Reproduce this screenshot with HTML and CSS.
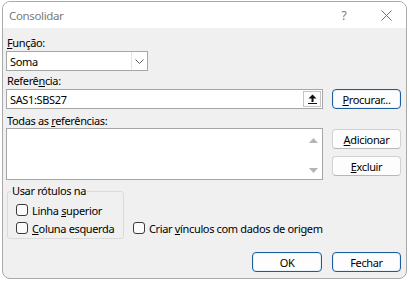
FILE: index.html
```html
<!DOCTYPE html>
<html lang="pt">
<head>
    <meta charset="UTF-8">
    <title>Consolidar</title>
    <link rel="stylesheet" href="styles.css">
</head>
<body>
    <div class="dialog">
        <!-- Title bar -->
        <div class="titlebar">
            <span class="title">Consolidar</span>
            <span class="caption-btn help">?</span>
            <span class="caption-btn close">
                <svg width="11" height="11" viewBox="0 0 11 11"><path d="M0.5 0.5 L10.5 10.5 M10.5 0.5 L0.5 10.5" stroke="#6f6f6f" stroke-width="1"/></svg>
            </span>
        </div>

        <div class="body">
            <div class="label"><u>F</u>unção:</div>
            <div class="select">
                <span class="select-value">Soma</span>
                <span class="select-arrow">
                    <svg width="9" height="5" viewBox="0 0 9 5"><path d="M0.5 0.5 L4.5 4.5 L8.5 0.5" fill="none" stroke="#606060" stroke-width="1"/></svg>
                </span>
            </div>

            <div class="label">Referê<u>n</u>cia:</div>
            <div class="row">
                <div class="input">
                    <span class="input-value">SAS1:SBS27</span>
                    <span class="collapse-btn">
                        <svg width="9" height="10" viewBox="0 0 9 10"><path d="M4.5 0.5 L8.5 4.5 L5.5 4.5 L5.5 8 L3.5 8 L3.5 4.5 L0.5 4.5 Z" fill="#111"/><rect x="0" y="9" width="9" height="1" fill="#111"/></svg>
                    </span>
                </div>
                <button class="btn btn-accent"><u>P</u>rocurar...</button>
            </div>

            <div class="label label-list">Todas as <u>r</u>eferências:</div>
            <div class="row row-list">
                <div class="listbox">
                    <div class="scrollbar">
                        <svg width="9" height="5" viewBox="0 0 9 5"><path d="M4.5 0 L9 5 L0 5 Z" fill="#b4b4b4"/></svg>
                        <svg width="9" height="5" viewBox="0 0 9 5"><path d="M0 0 L9 0 L4.5 5 Z" fill="#b4b4b4"/></svg>
                    </div>
                </div>
                <div class="side-buttons">
                    <button class="btn"><u>A</u>dicionar</button>
                    <button class="btn"><u>E</u>xcluir</button>
                </div>
            </div>

            <div class="row row-options">
                <fieldset class="group">
                    <legend>Usar rótulos na</legend>
                    <label class="check"><span class="box"></span><span>Linha <u>s</u>uperior</span></label>
                    <label class="check"><span class="box"></span><span><u>C</u>oluna esquerda</span></label>
                </fieldset>
                <label class="check check-link"><span class="box"></span><span>Criar <u>v</u>ínculos com dados de origem</span></label>
            </div>

            <div class="footer">
                <button class="btn btn-accent btn-ok">OK</button>
                <button class="btn btn-accent">Fechar</button>
            </div>
        </div>
    </div>
</body>
</html>
```

FILE: styles.css
```css
* {
    margin: 0;
    padding: 0;
    box-sizing: border-box;
}

body {
    font-family: 'Noto Sans', 'Open Sans', sans-serif;
    font-size: 11px;
    letter-spacing: -0.35px;
    color: #000000;
    background: #ffffff;
    width: 409px;
    height: 281px;
    overflow: hidden;
}

u {
    text-decoration: underline;
    text-underline-offset: 1px;
}

/* Window */
.dialog {
    margin: 1px 0 0 2px;
    width: 405px;
    height: 278px;
    border: 1px solid #a9a9a9;
    border-radius: 8px;
    overflow: hidden;
    background: #f0f0f0;
    display: flex;
    flex-direction: column;
}

.titlebar {
    height: 26px;
    background: #ffffff;
    display: flex;
    align-items: center;
    flex-shrink: 0;
}

.title {
    flex: 1;
    padding-left: 6px;
    color: #7a7a7a;
    font-size: 11.5px;
}

.caption-btn {
    display: flex;
    align-items: center;
    justify-content: center;
    height: 100%;
    color: #7a7a7a;
}

.help {
    width: 46px;
    font-size: 12px;
}

.close {
    width: 39px;
}

/* Body */
.body {
    flex: 1;
    padding: 7px 5px 0 3px;
    display: flex;
    flex-direction: column;
}

.label {
    height: 16px;
    line-height: 16px;
    padding-left: 1px;
}

.row + .label,
.select + .label {
    margin-top: 2px;
}

.label-list {
    margin-top: 4px !important;
    height: 15px;
    line-height: 15px;
}

.row {
    display: flex;
    gap: 9px;
}

.select {
    width: 142px;
    height: 20px;
    background: #ffffff;
    border: 1px solid #a6a6a6;
    display: flex;
    align-items: center;
}

.select-value {
    flex: 1;
    padding-left: 3px;
}

.select-arrow {
    width: 16px;
    height: 100%;
    border-left: 1px solid #e3e3e3;
    display: flex;
    align-items: center;
    justify-content: center;
}

.input {
    width: 317px;
    height: 20px;
    background: #ffffff;
    border: 1px solid #a6a6a6;
    display: flex;
    align-items: center;
    padding-right: 1px;
}

.input-value {
    flex: 1;
    padding-left: 3px;
}

.collapse-btn {
    width: 18px;
    height: 16px;
    border: 1px solid #c4c4c4;
    background: #fdfdfd;
    display: flex;
    align-items: center;
    justify-content: center;
}

/* Buttons */
.btn {
    width: 69px;
    height: 20px;
    font-family: inherit;
    font-size: 11px;
    letter-spacing: -0.35px;
    color: #000000;
    background: #fdfdfd;
    border: 1px solid #d0d0d0;
    border-bottom-color: #b8b8b8;
    border-radius: 4px;
}

.btn-accent {
    border: 1px solid #1d5c9c;
    box-shadow: inset 0 0 0 1px #e8f0f8;
}

.btn-ok {
    width: 70px;
}

/* List */
.listbox {
    width: 317px;
    height: 52px;
    background: #ffffff;
    border: 1px solid #a6a6a6;
    display: flex;
    justify-content: flex-end;
}

.scrollbar {
    width: 17px;
    padding: 9px 0 6px;
    display: flex;
    flex-direction: column;
    justify-content: space-between;
    align-items: center;
}

.side-buttons {
    padding-top: 1px;
    display: flex;
    flex-direction: column;
    gap: 7px;
}

/* Options */
.row-options {
    margin-top: 3px;
    gap: 9px;
    align-items: flex-end;
}

.group {
    margin-left: 1px;
    width: 117px;
    border: 1px solid #dadada;
    border-radius: 3px;
    padding: 2px 0 1px 8px;
}

.group legend {
    margin-left: -5px;
    padding: 0 1px;
    line-height: 16px;
}

.check {
    display: flex;
    align-items: center;
    gap: 4px;
    height: 18px;
    white-space: nowrap;
}

.box {
    width: 12px;
    height: 12px;
    border: 1px solid #3a3a3a;
    border-radius: 3px;
    background: #fbfbfb;
}

.check-link {
    margin-bottom: 2px;
}

/* Footer */
.footer {
    margin-top: 13px;
    display: flex;
    justify-content: flex-end;
    gap: 10px;
}
```
